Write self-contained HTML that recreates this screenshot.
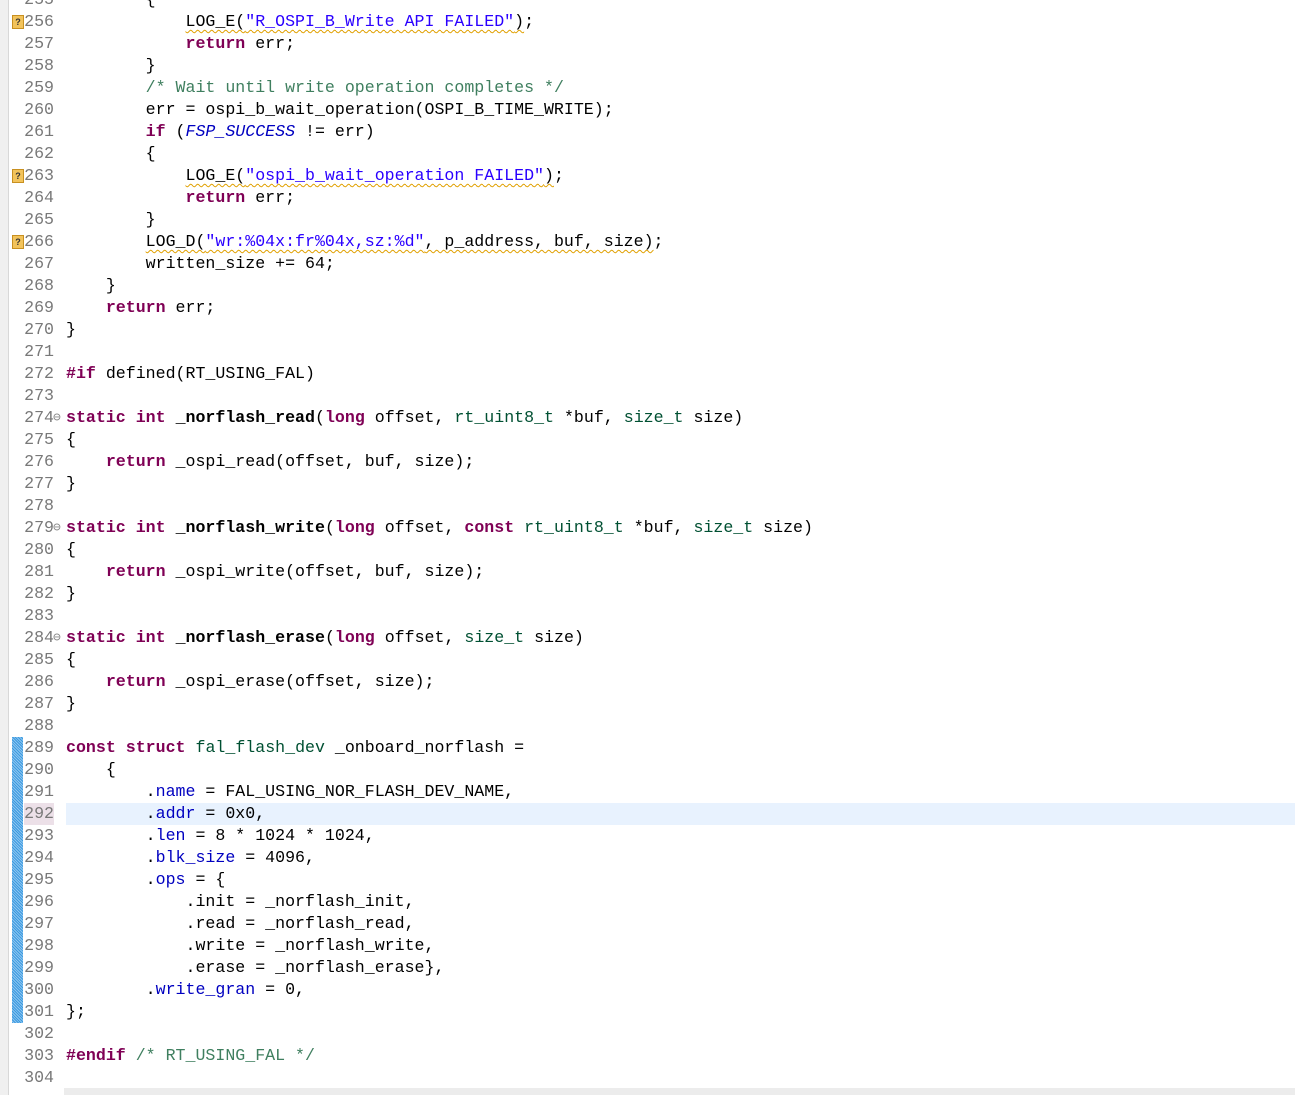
<!DOCTYPE html>
<html><head><meta charset="utf-8"><style>
body{margin:0;width:1295px;height:1095px;overflow:hidden;background:#fff;position:relative;font-family:"Liberation Mono",monospace;font-size:16.6px}
#lstrip{position:absolute;left:0;top:0;width:8px;height:1095px;background:#f0f0f0;border-right:1px solid #d8d8d8}
.ln{position:absolute;left:0;width:54px;text-align:right;color:#787878;height:22px;line-height:22px}
.cd{position:absolute;left:66px;white-space:pre;color:#000;height:22px;line-height:22px}
.k{color:#7f0055;font-weight:bold}.c{color:#3f7f5f}.s{color:#2a00ff}.t{color:#005032}.f{color:#0000c0}.m{color:#0000c0;font-style:italic}
.w{text-decoration:underline wavy #e0a000;text-decoration-thickness:1px;text-underline-offset:3px}
.warn{position:absolute;left:12px;width:10px;height:12px;background:#f2c35b;border:1px solid #c89020;font:bold 9px "Liberation Sans",sans-serif;color:#333;text-align:center;line-height:12px}
.fold{position:absolute;left:53px;font-size:13px;color:#888;line-height:22px}
.blue{position:absolute;left:12px;width:11px;background:repeating-linear-gradient(45deg,#3b9ae0 0 1px,#8cc4ef 1px 2px)}
</style></head><body>
<div id="lstrip"></div>
<div style="position:absolute;left:66px;top:803px;width:1229px;height:22px;background:#e8f2fe"></div>
<div style="position:absolute;left:24px;top:803px;width:30px;height:22px;background:#ece0e8"></div>
<div class="blue" style="top:737px;height:286px"></div>
<div style="position:absolute;left:64px;top:1088px;width:1231px;height:7px;background:#ececec"></div>
<div id="code"></div>
<script>
var L=[
[255,'        {'],
[256,'            <span class="w">LOG_E(<span class="s">"R_OSPI_B_Write API FAILED"</span>)</span>;'],
[257,'            <span class="k">return</span> err;'],
[258,'        }'],
[259,'        <span class="c">/* Wait until write operation completes */</span>'],
[260,'        err = ospi_b_wait_operation(OSPI_B_TIME_WRITE);'],
[261,'        <span class="k">if</span> (<span class="m">FSP_SUCCESS</span> != err)'],
[262,'        {'],
[263,'            <span class="w">LOG_E(<span class="s">"ospi_b_wait_operation FAILED"</span>)</span>;'],
[264,'            <span class="k">return</span> err;'],
[265,'        }'],
[266,'        <span class="w">LOG_D(<span class="s">"wr:%04x:fr%04x,sz:%d"</span>, p_address, buf, size)</span>;'],
[267,'        written_size += 64;'],
[268,'    }'],
[269,'    <span class="k">return</span> err;'],
[270,'}'],
[271,''],
[272,'<span class="k">#if</span> defined(RT_USING_FAL)'],
[273,''],
[274,'<span class="k">static</span> <span class="k">int</span> <b>_norflash_read</b>(<span class="k">long</span> offset, <span class="t">rt_uint8_t</span> *buf, <span class="t">size_t</span> size)'],
[275,'{'],
[276,'    <span class="k">return</span> _ospi_read(offset, buf, size);'],
[277,'}'],
[278,''],
[279,'<span class="k">static</span> <span class="k">int</span> <b>_norflash_write</b>(<span class="k">long</span> offset, <span class="k">const</span> <span class="t">rt_uint8_t</span> *buf, <span class="t">size_t</span> size)'],
[280,'{'],
[281,'    <span class="k">return</span> _ospi_write(offset, buf, size);'],
[282,'}'],
[283,''],
[284,'<span class="k">static</span> <span class="k">int</span> <b>_norflash_erase</b>(<span class="k">long</span> offset, <span class="t">size_t</span> size)'],
[285,'{'],
[286,'    <span class="k">return</span> _ospi_erase(offset, size);'],
[287,'}'],
[288,''],
[289,'<span class="k">const</span> <span class="k">struct</span> <span class="t">fal_flash_dev</span> _onboard_norflash ='],
[290,'    {'],
[291,'        .<span class="f">name</span> = FAL_USING_NOR_FLASH_DEV_NAME,'],
[292,'        .<span class="f">addr</span> = 0x0,'],
[293,'        .<span class="f">len</span> = 8 * 1024 * 1024,'],
[294,'        .<span class="f">blk_size</span> = 4096,'],
[295,'        .<span class="f">ops</span> = {'],
[296,'            .init = _norflash_init,'],
[297,'            .read = _norflash_read,'],
[298,'            .write = _norflash_write,'],
[299,'            .erase = _norflash_erase},'],
[300,'        .<span class="f">write_gran</span> = 0,'],
[301,'};'],
[302,''],
[303,'<span class="k">#endif</span> <span class="c">/* RT_USING_FAL */</span>'],
[304,'']];
var h='';
L.forEach(function(a){var top=11+(a[0]-256)*22;
h+='<div class="ln" style="top:'+top+'px">'+a[0]+'</div><div class="cd" style="top:'+top+'px">'+a[1]+'</div>';
if(a[0]==256||a[0]==263||a[0]==266)h+='<div class="warn" style="top:'+(top+4)+'px">?</div>';
if(a[0]==274||a[0]==279||a[0]==284)h+='<div class="fold" style="top:'+top+'px">⊖</div>';});
document.getElementById('code').innerHTML=h;
</script>
</body></html>
